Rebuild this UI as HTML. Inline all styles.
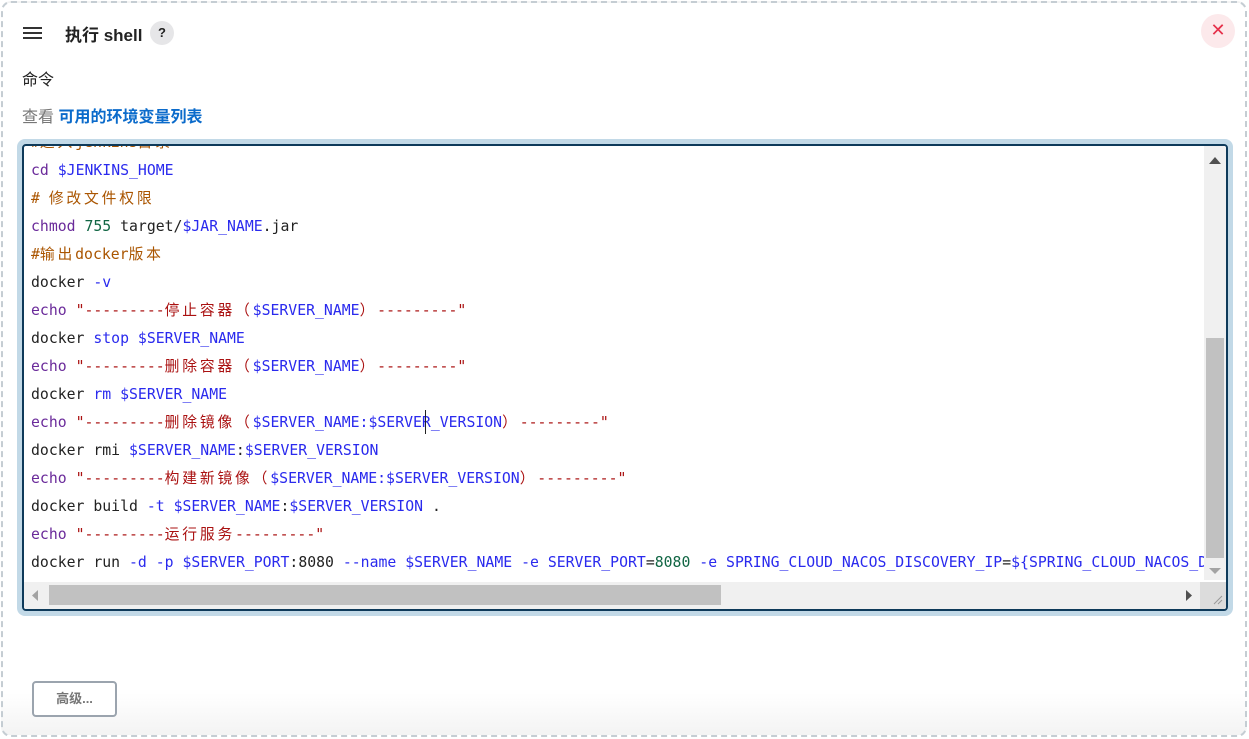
<!DOCTYPE html>
<html><head><meta charset="utf-8"><style>
*{box-sizing:border-box;margin:0;padding:0}
body{width:1249px;height:739px;background:#fff;font-family:"Liberation Sans","Noto Sans CJK SC",sans-serif;position:relative;overflow:hidden}
.outer{position:absolute;left:1px;top:1px;width:1246px;height:736px;border:2px dashed #c5cdd3;border-radius:10px;background:linear-gradient(to bottom,#fff 0,#fff 690px,#f2f2f2 736px)}
.ham{position:absolute;left:23px;top:27px;width:19px}
.ham i{display:block;height:2px;background:#333;margin-bottom:3px}
.title{position:absolute;left:65px;top:21px;font-size:17px;font-weight:bold;color:#222}
.q{position:absolute;left:150px;top:21px;width:24px;height:24px;border-radius:50%;background:#e6e6e8;font-size:13px;font-weight:bold;text-align:center;line-height:24px;color:#222}
.x{position:absolute;left:1201px;top:14px;width:34px;height:34px;border-radius:50%;background:#fce9eb;color:#e5304a;text-align:center;line-height:33px;font-size:18px}
.lbl{position:absolute;left:22px;top:66px;font-size:16px;color:#222}
.lnk{position:absolute;left:22px;top:103px;font-size:16px;color:#777}
.lnk b{color:#0b6bcb}
.ring{position:absolute;left:17px;top:139px;width:1216px;height:477px;border-radius:8px;background:#c2d9e7}
.ta{position:absolute;left:22px;top:144px;width:1206px;height:467px;border:2px solid #0e3a5a;border-radius:4px;background:#fff;overflow:hidden}
.code{position:absolute;left:7px;top:-17px;font-family:"DejaVu Sans Mono","Noto Sans CJK SC",monospace;font-size:14.8px;line-height:28px;white-space:pre;color:#222}
.c{letter-spacing:2.8px}
.k{color:#6a2a9a}.s{color:#a11}.v{color:#2a2aee}.n{color:#164}.m{color:#a50}
.vs{position:absolute;right:0;top:0;width:22px;height:434px;background:#f0f0f0}
.vs .th{position:absolute;left:2px;top:192px;width:18px;height:220px;background:#c1c1c1}
.hs{position:absolute;left:0;top:436px;width:1176px;height:27px;background:#f0f0f0}
.hs .th{position:absolute;left:25px;top:3px;width:672px;height:20px;background:#c1c1c1}
.corner{position:absolute;right:0;top:436px;width:26px;height:27px;background:#dcdcdc}
.btn{position:absolute;left:32px;top:681px;width:85px;height:36px;border:2px solid #9ba4ae;border-radius:4px;font-size:13px;font-weight:bold;color:#777;text-align:center;line-height:32px;background:#fff}
.cur{position:absolute;left:401px;top:264px;width:1px;height:24px;background:#222}
</style></head><body>
<div class="outer"></div>
<div class="ham"><i></i><i></i><i></i></div>
<div class="title">执行 shell</div>
<div class="q">?</div>
<div class="x">✕</div>
<div class="lbl">命令</div>
<div class="lnk">查看 <b>可用的环境变量列表</b></div>
<div class="ring"></div>
<div class="ta">
<div class="code"><span class="m">#<span class="c">进入</span>jenkins<span class="c">目录</span></span>
<span class="k">cd</span> <span class="v">$JENKINS_HOME</span>
<span class="m"># <span class="c">修改文件权限</span></span>
<span class="k">chmod</span> <span class="n">755</span> target/<span class="v">$JAR_NAME</span>.jar
<span class="m">#<span class="c">输出</span>docker<span class="c">版本</span></span>
docker <span class="v">-v</span>
<span class="k">echo</span> <span class="s">"---------<span class="c">停止容器（</span></span><span class="v">$SERVER_NAME</span><span class="s"><span class="c">）</span>---------"</span>
docker <span class="v">stop</span> <span class="v">$SERVER_NAME</span>
<span class="k">echo</span> <span class="s">"---------<span class="c">删除容器（</span></span><span class="v">$SERVER_NAME</span><span class="s"><span class="c">）</span>---------"</span>
docker <span class="v">rm</span> <span class="v">$SERVER_NAME</span>
<span class="k">echo</span> <span class="s">"---------<span class="c">删除镜像（</span></span><span class="v">$SERVER_NAME:$SERVER_VERSION</span><span class="s"><span class="c">）</span>---------"</span>
docker rmi <span class="v">$SERVER_NAME</span>:<span class="v">$SERVER_VERSION</span>
<span class="k">echo</span> <span class="s">"---------<span class="c">构建新镜像（</span></span><span class="v">$SERVER_NAME:$SERVER_VERSION</span><span class="s"><span class="c">）</span>---------"</span>
docker build <span class="v">-t</span> <span class="v">$SERVER_NAME</span>:<span class="v">$SERVER_VERSION</span> .
<span class="k">echo</span> <span class="s">"---------<span class="c">运行服务</span>---------"</span>
docker run <span class="v">-d</span> <span class="v">-p</span> <span class="v">$SERVER_PORT</span>:8080 <span class="v">--name</span> <span class="v">$SERVER_NAME</span> <span class="v">-e</span> <span class="v">SERVER_PORT</span>=<span class="n">8080</span> <span class="v">-e</span> <span class="v">SPRING_CLOUD_NACOS_DISCOVERY_IP</span>=<span class="v">${SPRING_CLOUD_NACOS_DISCOVERY_IP}</span></div>
<div class="cur"></div>
<div class="vs"><svg width="22" height="434" style="position:absolute;left:0;top:0"><path d="M5 18 L11 11 L17 18Z" fill="#505050"/><path d="M5 422 L11 428 L17 422Z" fill="#a3a3a3"/></svg><div class="th"></div></div>
<div class="hs"><svg width="1176" height="27" style="position:absolute;left:0;top:0"><path d="M14 8 L8 13.5 L14 19Z" fill="#a3a3a3"/><path d="M1162 8 L1168 13.5 L1162 19Z" fill="#505050"/></svg><div class="th"></div></div>
<div class="corner"><svg width="26" height="27"><path d="M14 22 L22 14 M18 22 L22 18" stroke="#999" stroke-width="1"/></svg></div>
</div>
<div class="btn">高级...</div>
</body></html>
